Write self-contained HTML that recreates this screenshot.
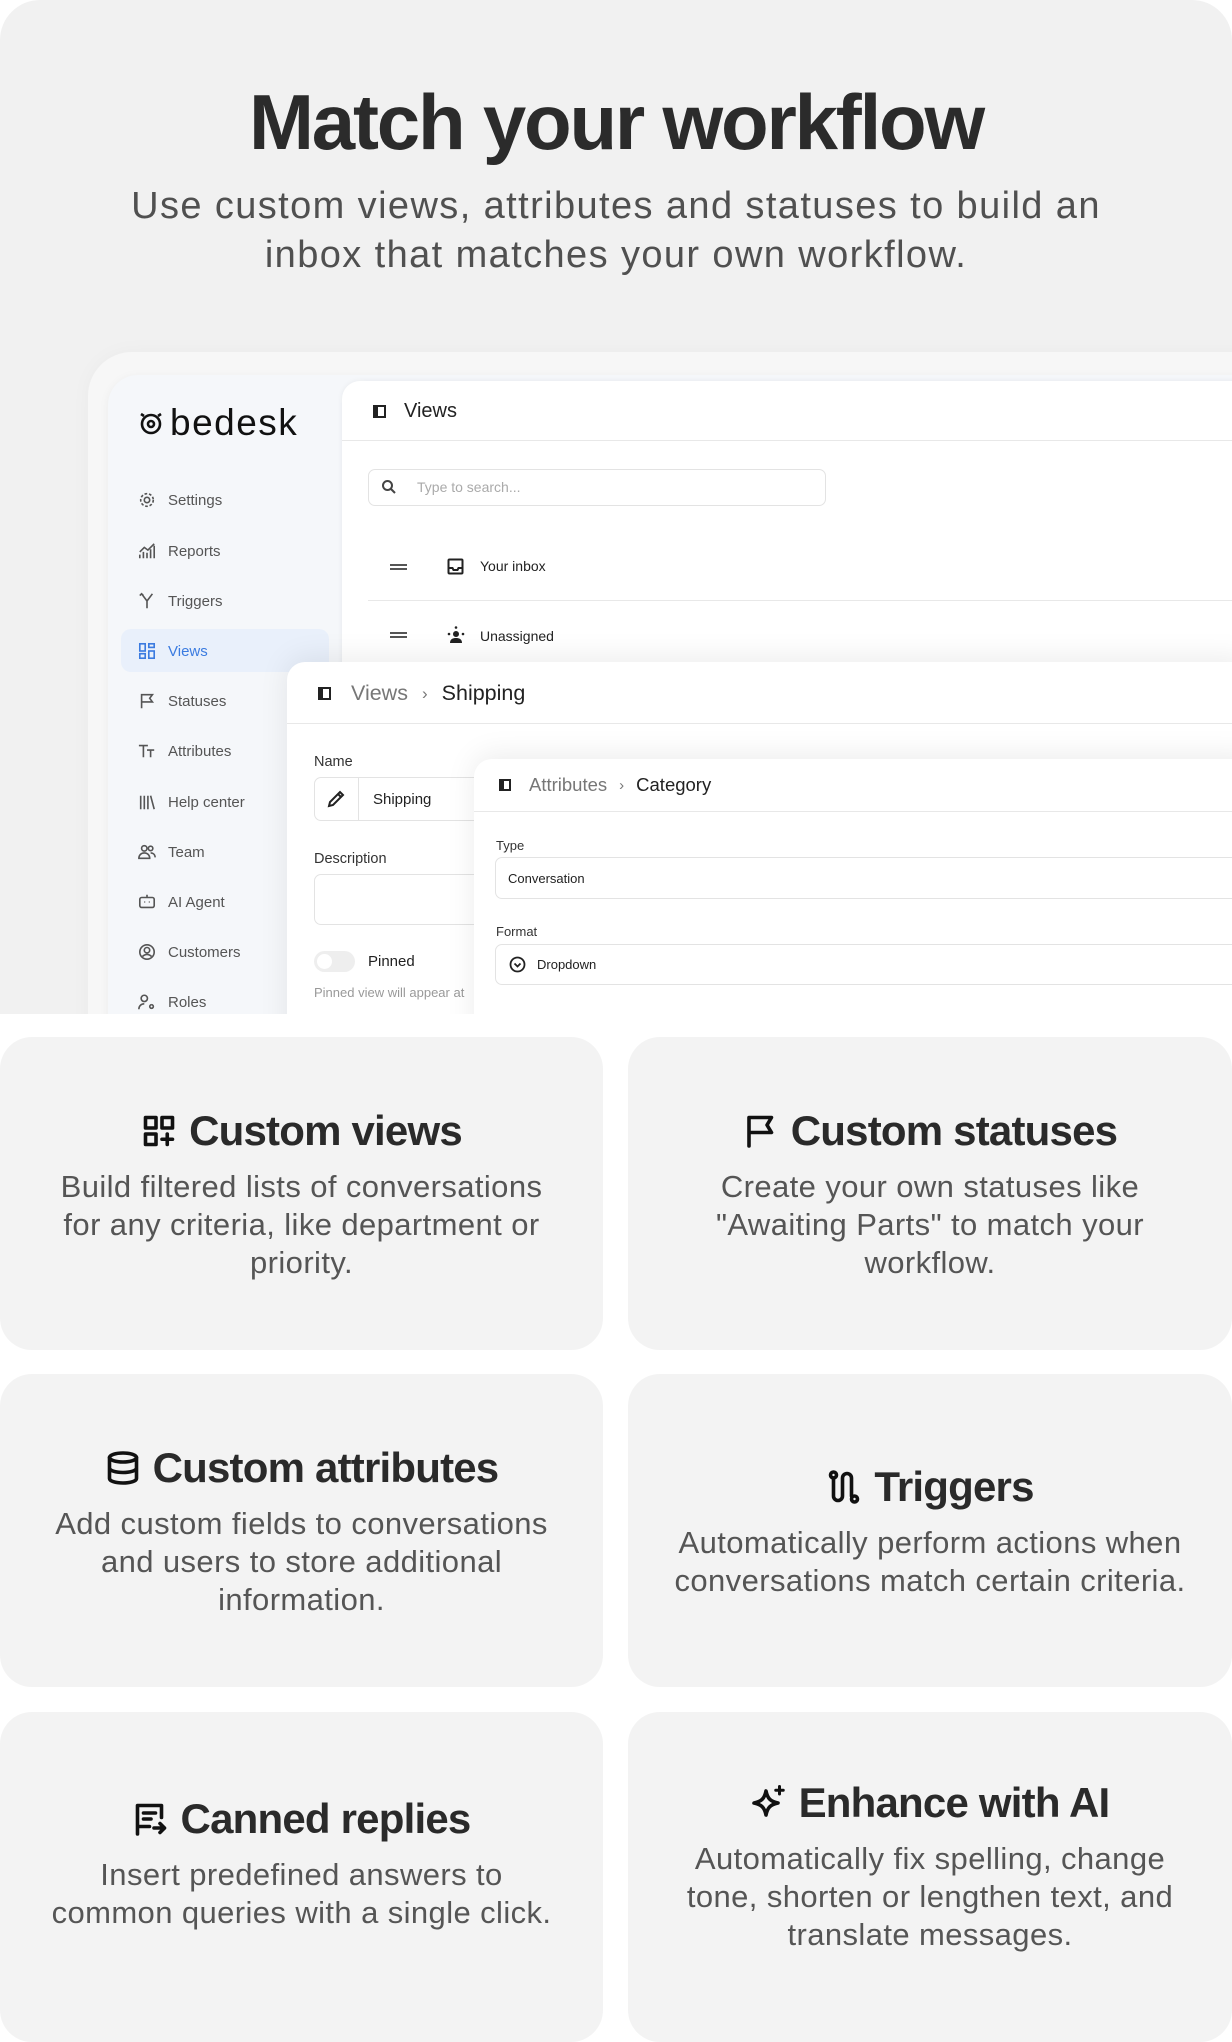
<!DOCTYPE html>
<html><head><meta charset="utf-8"><style>
*{box-sizing:border-box;margin:0;padding:0}
body{width:1232px;height:2024px;background:#fff;font-family:"Liberation Sans",sans-serif;position:relative;overflow:hidden;color:#2a2a2a}
.abs{position:absolute}
.top{left:0;top:0;width:1232px;height:1014px;background:#f1f1f1;border-radius:40px 40px 0 0;overflow:hidden}
h1{position:absolute;left:0;width:1232px;top:77px;text-align:center;font-size:78px;font-weight:700;letter-spacing:-2.2px;color:#2b2b2b}
.sub{position:absolute;left:0;width:1232px;top:182px;text-align:center;font-size:38px;line-height:49px;color:#505050;letter-spacing:1.4px}
.frame{left:88px;top:352px;width:1200px;height:720px;background:#f7f7f7;border-radius:44px;box-shadow:0 0 20px rgba(0,0,0,.03)}
.app{left:108px;top:375px;width:1200px;height:700px;background:#f5f7fa;border-radius:30px;box-shadow:0 2px 10px rgba(0,0,0,.05)}
.logo{left:136px;top:402px;font-size:37px;color:#111;letter-spacing:1.5px}
.nav{left:138px;font-size:15px;color:#555;display:flex;align-items:center}
.nav svg{width:18px;height:18px;margin-right:12px;fill:none;stroke:#555;stroke-width:1.8}
.act{left:121px;top:629px;width:208px;height:43px;background:#e9f0fb;border-radius:10px}
.p1{left:342px;top:381px;width:900px;height:700px;background:#fff;border-radius:18px 0 0 0;box-shadow:0 0 6px rgba(0,0,0,.06)}
.line{height:1px;background:#e8e8e8}
.panel{background:#fff;border-radius:18px 0 0 0;box-shadow:0 -4px 30px rgba(0,0,0,.08)}
.lbl{font-size:14.5px;color:#333}
.inp{border:1px solid #e3e3e3;border-radius:7px;background:#fff}
.ico{display:inline-block;width:13px;height:13px;border:2.5px solid #222;border-left-width:5px}
.card{position:absolute;background:#f3f3f3;border-radius:32px;display:flex;flex-direction:column;align-items:center;justify-content:center;text-align:center;overflow:hidden}
.card h2{font-size:42px;font-weight:700;letter-spacing:-0.8px;color:#2a2a2a;display:flex;align-items:center;gap:12px;line-height:50px;margin-bottom:12px}
.card h2 svg{width:36px;height:36px;fill:none;stroke:#111;stroke-width:2.4;stroke-linecap:round;stroke-linejoin:round}
.card p{font-size:31px;line-height:38px;color:#555;letter-spacing:0.4px}
</style></head><body>
<div class="abs top">
<h1>Match your workflow</h1>
<div class="sub">Use custom views, attributes and statuses to build an<br>inbox that matches your own workflow.</div>
<div class="abs frame"></div>
<div class="abs app"></div>
<div class="abs logo"><svg width="30" height="30" viewBox="0 0 30 30" style="vertical-align:-3px;margin-right:4px" fill="none" stroke="#111" stroke-width="2.6"><circle cx="15" cy="16" r="9"/><circle cx="15" cy="16" r="3"/><path d="M5 6l3 2M25 6l-3 2"/></svg>bedesk</div>
<div class="abs act"></div>
<div class="abs nav" style="top:491px"><svg viewBox="0 0 20 20"><circle cx="10" cy="10" r="3"/><circle cx="10" cy="10" r="7" stroke-dasharray="3 2"/></svg>Settings</div>
<div class="abs nav" style="top:542px"><svg viewBox="0 0 20 20"><path d="M2 18V14M6 18V11M10 18V12M14 18V8M18 18V4M2 11l5-5 4 3 7-7"/></svg>Reports</div>
<div class="abs nav" style="top:592px"><svg viewBox="0 0 20 20"><path d="M10 18V10M4 2l6 8 6-8M2 4l2-2 2 2"/></svg>Triggers</div>
<div class="abs nav" style="top:642px;color:#3b7be0"><svg viewBox="0 0 20 20" style="stroke:#3b7be0"><rect x="2" y="2" width="6" height="8"/><rect x="12" y="2" width="6" height="4"/><rect x="2" y="13" width="6" height="5"/><rect x="12" y="10" width="6" height="8"/></svg>Views</div>
<div class="abs nav" style="top:692px"><svg viewBox="0 0 20 20"><path d="M4 18V3h12l-3 4 3 4H4"/></svg>Statuses</div>
<div class="abs nav" style="top:742px"><svg viewBox="0 0 20 20"><path d="M1 4h10M6 4v13M10 9h8M14 9v8"/></svg>Attributes</div>
<div class="abs nav" style="top:793px"><svg viewBox="0 0 20 20"><path d="M3 3v15M7 3v15M11 3v15M14 3l4 15"/></svg>Help center</div>
<div class="abs nav" style="top:843px"><svg viewBox="0 0 20 20"><circle cx="7" cy="6" r="3"/><circle cx="14" cy="6" r="2.5"/><path d="M1 17c0-4 3-6 6-6s6 2 6 6zM14 11c3 0 5 2 5 5"/></svg>Team</div>
<div class="abs nav" style="top:893px"><svg viewBox="0 0 20 20"><rect x="2" y="5" width="16" height="11" rx="2"/><path d="M10 2v3M7 10h1M12 10h1"/></svg>AI Agent</div>
<div class="abs nav" style="top:943px"><svg viewBox="0 0 20 20"><circle cx="10" cy="10" r="8"/><circle cx="10" cy="8" r="3"/><path d="M5 15c3-3 7-3 10 0"/></svg>Customers</div>
<div class="abs nav" style="top:993px"><svg viewBox="0 0 20 20"><circle cx="7" cy="6" r="3.5"/><path d="M1 18c0-4 3-6 6-6M15 13a2 2 0 1 0 .1 0"/></svg>Roles</div>

<div class="abs p1"></div>
<div class="abs" style="left:373px;top:400px;font-size:20px;color:#222;display:flex;align-items:center"><span class="ico" style="margin-right:18px"></span>Views</div>
<div class="abs line" style="left:342px;top:440px;width:900px"></div>
<div class="abs inp" style="left:368px;top:469px;width:458px;height:37px"></div>
<svg class="abs" style="left:381px;top:479px" width="16" height="16" viewBox="0 0 16 16" fill="none" stroke="#444" stroke-width="2"><circle cx="6.5" cy="6.5" r="4.5"/><path d="M10 10l4 4"/></svg>
<div class="abs" style="left:417px;top:479px;font-size:14px;color:#aaa">Type to search...</div>
<div class="abs" style="left:390px;top:564px;width:17px;height:6px;border-top:2px solid #555;border-bottom:2px solid #555"></div>
<svg class="abs" style="left:447px;top:558px" width="17" height="17" viewBox="0 0 17 17" fill="none" stroke="#222" stroke-width="2"><rect x="1.5" y="1.5" width="14" height="14" rx="1"/><path d="M1.5 10h4l1 2h4l1-2h4"/></svg>
<div class="abs" style="left:480px;top:558px;font-size:14px;color:#222">Your inbox</div>
<div class="abs line" style="left:368px;top:600px;width:880px"></div>
<div class="abs" style="left:390px;top:632px;width:17px;height:6px;border-top:2px solid #555;border-bottom:2px solid #555"></div>
<svg class="abs" style="left:447px;top:626px" width="18" height="18" viewBox="0 0 18 18" fill="#222"><circle cx="9" cy="8" r="3"/><path d="M3 17c0-4 3-5 6-5s6 1 6 5z"/><circle cx="2" cy="8" r="1.3"/><circle cx="16" cy="8" r="1.3"/><circle cx="9" cy="1.5" r="1.3"/></svg>
<div class="abs" style="left:480px;top:628px;font-size:14px;color:#222">Unassigned</div>

<div class="abs panel" style="left:287px;top:662px;width:960px;height:400px"></div>
<div class="abs" style="left:318px;top:681px;font-size:21.5px;display:flex;align-items:center"><span class="ico" style="margin-right:20px"></span><span style="color:#777">Views</span><span style="color:#777;margin:0 14px;font-size:17px">›</span><span style="color:#222">Shipping</span></div>
<div class="abs line" style="left:287px;top:723px;width:960px"></div>
<div class="abs lbl" style="left:314px;top:754px">Name</div>
<div class="abs inp" style="left:314px;top:777px;width:200px;height:44px"></div>
<div class="abs" style="left:358px;top:777px;width:1px;height:44px;background:#e3e3e3"></div>
<svg class="abs" style="left:326px;top:789px" width="20" height="20" viewBox="0 0 20 20" fill="none" stroke="#222" stroke-width="2"><path d="M3 17l1-4 10-10 3 3-10 10zM12 5l3 3"/></svg>
<div class="abs" style="left:373px;top:791px;font-size:15px;color:#222">Shipping</div>
<div class="abs lbl" style="left:314px;top:851px">Description</div>
<div class="abs inp" style="left:314px;top:874px;width:200px;height:51px"></div>
<div class="abs" style="left:314px;top:951px;width:41px;height:21px;border-radius:11px;background:#eee"><div style="margin:3px;width:15px;height:15px;border-radius:50%;background:#fff"></div></div>
<div class="abs" style="left:368px;top:953px;font-size:15px;color:#222">Pinned</div>
<div class="abs" style="left:314px;top:985px;font-size:13px;color:#999">Pinned view will appear at</div>

<div class="abs panel" style="left:474px;top:759px;width:780px;height:300px"></div>
<div class="abs" style="left:499px;top:774px;font-size:18.5px;display:flex;align-items:center"><span class="ico" style="width:12px;height:12px;margin-right:18px"></span><span style="color:#777">Attributes</span><span style="color:#777;margin:0 12px;font-size:15px">›</span><span style="color:#222">Category</span></div>
<div class="abs line" style="left:474px;top:811px;width:760px"></div>
<div class="abs lbl" style="left:496px;top:838px;font-size:13px">Type</div>
<div class="abs inp" style="left:495px;top:857px;width:760px;height:42px"></div>
<div class="abs" style="left:508px;top:871px;font-size:13px;color:#222">Conversation</div>
<div class="abs lbl" style="left:496px;top:924px;font-size:13px">Format</div>
<div class="abs inp" style="left:495px;top:944px;width:760px;height:41px"></div>
<svg class="abs" style="left:509px;top:956px" width="17" height="17" viewBox="0 0 17 17" fill="none" stroke="#222" stroke-width="1.8"><circle cx="8.5" cy="8.5" r="7"/><path d="M5.5 7.5l3 3 3-3"/></svg>
<div class="abs" style="left:537px;top:957px;font-size:13px;color:#222">Dropdown</div>
</div>

<div class="card" style="left:0;top:1037px;width:603px;height:313px">
<h2><svg viewBox="0 0 24 24"><rect x="3" y="3" width="7" height="7"/><rect x="14" y="3" width="7" height="7"/><rect x="3" y="14" width="7" height="7"/><path d="M17.5 14v7M14 17.5h7"/></svg>Custom views</h2>
<p>Build filtered lists of conversations<br>for any criteria, like department or<br>priority.</p></div>
<div class="card" style="left:628px;top:1037px;width:604px;height:313px">
<h2><svg viewBox="0 0 24 24"><path d="M4 22V3h15l-3 5 3 5H4"/></svg>Custom statuses</h2>
<p>Create your own statuses like<br>"Awaiting Parts" to match your<br>workflow.</p></div>
<div class="card" style="left:0;top:1374px;width:603px;height:313px">
<h2><svg viewBox="0 0 24 24"><ellipse cx="12" cy="5" rx="9" ry="3"/><path d="M3 5v14c0 1.7 4 3 9 3s9-1.3 9-3V5M3 12c0 1.7 4 3 9 3s9-1.3 9-3"/></svg>Custom attributes</h2>
<p>Add custom fields to conversations<br>and users to store additional<br>information.</p></div>
<div class="card" style="left:628px;top:1374px;width:604px;height:313px">
<h2><svg viewBox="0 0 24 24"><circle cx="5" cy="4" r="2"/><circle cx="19" cy="20" r="2"/><path d="M5 6v12a3 3 0 0 0 6 0V6a3 3 0 0 1 6 0v12"/></svg>Triggers</h2>
<p>Automatically perform actions when<br>conversations match certain criteria.</p></div>
<div class="card" style="left:0;top:1712px;width:603px;height:330px;justify-content:flex-start;padding-top:82px">
<h2><svg viewBox="0 0 24 24"><path d="M3 22V3h16v8M3 17h8M7 8h8M7 12h5M14 18h7M18 15l3 3-3 3"/></svg>Canned replies</h2>
<p>Insert predefined answers to<br>common queries with a single click.</p></div>
<div class="card" style="left:628px;top:1712px;width:604px;height:330px;justify-content:flex-start;padding-top:66px">
<h2><svg viewBox="0 0 24 24"><path d="M10 4c1 5 3 7 8 8-5 1-7 3-8 8-1-5-3-7-8-8 5-1 7-3 8-8z"/><path d="M19 1v5M16.5 3.5h5" stroke-width="2"/></svg>Enhance with AI</h2>
<p>Automatically fix spelling, change<br>tone, shorten or lengthen text, and<br>translate messages.</p></div>
</body></html>
